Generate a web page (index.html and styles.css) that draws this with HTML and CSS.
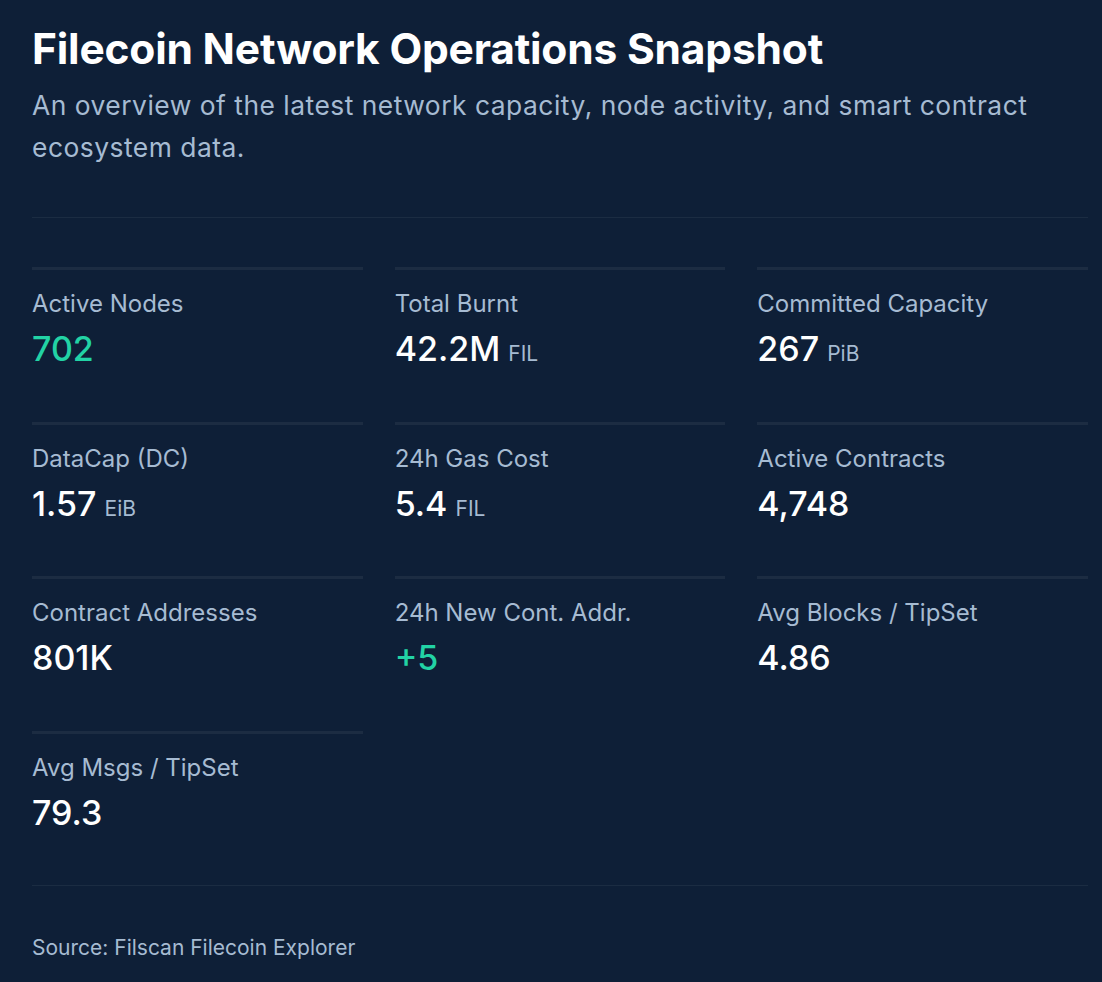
FILE: index.html
```html
<!DOCTYPE html>
<html lang="en">
<head>
<meta charset="utf-8">
<title>Filecoin Network Operations Snapshot</title>
<link rel="stylesheet" href="styles.css">
</head>
<body>
<main class="page">
  <header class="head">
    <h1 class="title">Filecoin Network Operations Snapshot</h1>
    <p class="subtitle">An overview of the latest network capacity, node activity, and smart contract ecosystem data.</p>
  </header>
  <section class="grid">
    <div class="card">
      <div class="label">Active Nodes</div>
      <div class="value accent">702</div>
    </div>
    <div class="card">
      <div class="label">Total Burnt</div>
      <div class="value">42.2M <span class="unit">FIL</span></div>
    </div>
    <div class="card">
      <div class="label">Committed Capacity</div>
      <div class="value">267 <span class="unit">PiB</span></div>
    </div>
    <div class="card">
      <div class="label">DataCap (DC)</div>
      <div class="value">1.57 <span class="unit">EiB</span></div>
    </div>
    <div class="card">
      <div class="label">24h Gas Cost</div>
      <div class="value">5.4 <span class="unit">FIL</span></div>
    </div>
    <div class="card">
      <div class="label">Active Contracts</div>
      <div class="value">4,748</div>
    </div>
    <div class="card">
      <div class="label">Contract Addresses</div>
      <div class="value">801K</div>
    </div>
    <div class="card">
      <div class="label">24h New Cont. Addr.</div>
      <div class="value accent">+5</div>
    </div>
    <div class="card">
      <div class="label">Avg Blocks / TipSet</div>
      <div class="value">4.86</div>
    </div>
    <div class="card">
      <div class="label">Avg Msgs / TipSet</div>
      <div class="value">79.3</div>
    </div>
  </section>
  <footer class="foot">Source: Filscan Filecoin Explorer</footer>
</main>
</body>
</html>
```
FILE: styles.css
```css
html, body {
  margin: 0;
  padding: 0;
  background: #0e1f37;
}
body {
  font-family: Inter, "Open Sans", "Liberation Sans", sans-serif;
  color: #ffffff;
}
.page {
  padding: 22px 14px 0 32px;
}
.head {
  padding-bottom: 49px;
  border-bottom: 1px solid #1b2c42;
}
.title {
  margin: 0;
  font-size: 42.5px;
  line-height: 54px;
  font-weight: 700;
  letter-spacing: -0.2px;
  color: #ffffff;
}
.subtitle {
  margin: 8px 0 0;
  font-size: 26.4px;
  line-height: 42px;
  letter-spacing: 0.5px;
  color: #a6bbd2;
}
.grid {
  display: grid;
  grid-template-columns: repeat(3, 1fr);
  column-gap: 32px;
  row-gap: 30.7px;
  margin-top: 49px;
  padding-bottom: 30px;
  border-bottom: 1px solid #1b2c42;
}
.card {
  border-top: 3px solid #1c2c42;
  padding: 19px 0 20px;
}
.label {
  font-size: 24px;
  line-height: 30px;
  color: #a6bbd2;
}
.value {
  margin-top: 8px;
  font-size: 34px;
  line-height: 44px;
  font-weight: 500;
  color: #ffffff;
}
.value.accent {
  color: #22d3a5;
}
.unit {
  margin-left: -1px;
  font-size: 21px;
  line-height: 0;
  font-weight: 400;
  color: #a6bbd2;
}
.foot {
  padding: 48px 0 20px;
  font-size: 21px;
  line-height: 28px;
  color: #a6bbd2;
}
```
